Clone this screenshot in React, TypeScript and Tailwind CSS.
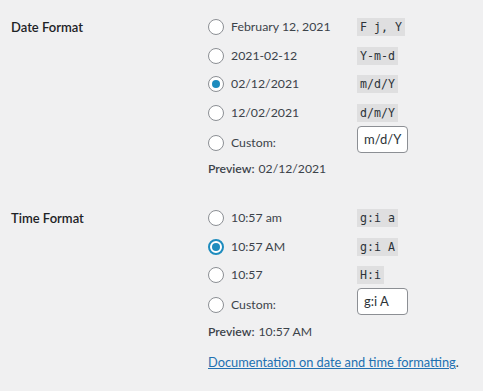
const sans = "font-['Segoe_UI','Lato','Liberation_Sans',sans-serif]";

type Opt = { label: string; code: string; checked?: boolean; focus?: boolean };

const dateOpts: Opt[] = [
  { label: "February 12, 2021", code: "F j, Y" },
  { label: "2021-02-12", code: "Y-m-d" },
  { label: "02/12/2021", code: "m/d/Y", checked: true },
  { label: "12/02/2021", code: "d/m/Y" },
];

const timeOpts: Opt[] = [
  { label: "10:57 am", code: "g:i a" },
  { label: "10:57 AM", code: "g:i A", checked: true, focus: true },
  { label: "10:57", code: "H:i" },
];

const Radio = ({ checked, focus }: { checked?: boolean; focus?: boolean }) => (
  <span
    className={
      "flex h-4 w-4 shrink-0 items-center justify-center rounded-full bg-white " +
      (focus ? "border-[2px] border-[#1e8cbe]" : "border border-[#8c8f94]")
    }
  >
    {checked && <span className="h-2 w-2 rounded-full bg-[#1e8cbe]" />}
  </span>
);

const Row = ({ opt }: { opt: Opt }) => (
  <div className="flex h-[28.5px] items-center">
    <div className="flex w-[149px] items-center gap-[7px]">
      <Radio checked={opt.checked} focus={opt.focus} />
      <span className="text-[12.3px] text-[#3c434a]">{opt.label}</span>
    </div>
    <code className="bg-[#dfdfe0] px-[3px] font-['DejaVu_Sans_Mono',monospace] text-[11.6px] leading-[18px] text-[#2c3338]">
      {opt.code}
    </code>
  </div>
);

const Custom = ({ value }: { value: string }) => (
  <div className="flex items-start">
    <div className="mt-[8.5px] flex w-[149px] items-center gap-[7px]">
      <Radio />
      <span className="text-[12.3px] leading-4 text-[#3c434a]">Custom:</span>
    </div>
    <div className="flex h-[27px] w-[51px] items-center overflow-hidden whitespace-nowrap rounded-[4px] border border-[#8c8f94] bg-white px-[6px] text-[13px] text-[#2c3338]">
      {value}
    </div>
  </div>
);

const Preview = ({ value }: { value: string }) => (
  <div className="flex h-5 items-center text-[12.2px] text-[#3c434a]">
    <span className="font-semibold">Preview:</span>
    <span className="ml-[4px]">{value}</span>
  </div>
);

export default function App() {
  return (
    <div className={`h-[391px] w-[483px] bg-[#f0f0f1] ${sans}`}>
      {/* Date */}
      <div className="flex pt-[13px]">
        <div className="flex h-[28.5px] w-[208px] items-center pl-[11px] text-[13px] font-semibold text-[#1d2327]">
          Date Format
        </div>
        <div className="flex flex-col">
          {dateOpts.map((o) => (
            <Row key={o.code} opt={o} />
          ))}
          <div className="-mt-[1px]">
            <Custom value="m/d/Y" />
          </div>
          <div className="mt-[6px]">
            <Preview value="02/12/2021" />
          </div>
        </div>
      </div>

      {/* Time */}
      <div className="mt-[25px] flex">
        <div className="flex h-[28.5px] w-[208px] items-center pl-[11px] text-[13px] font-semibold text-[#1d2327]">
          Time Format
        </div>
        <div className="flex flex-col">
          {timeOpts.map((o) => (
            <Row key={o.code} opt={o} />
          ))}
          <div className="-mt-[1.5px]">
            <Custom value="g:i A" />
          </div>
          <div className="mt-[7px]">
            <Preview value="10:57 AM" />
          </div>
          <div className="mt-[11px] flex h-5 items-center text-[12.8px] text-[#3c434a]">
            <a href="#" className="text-[#2271b1] underline">
              Documentation on date and time formatting
            </a>
            .
          </div>
        </div>
      </div>
    </div>
  );
}
